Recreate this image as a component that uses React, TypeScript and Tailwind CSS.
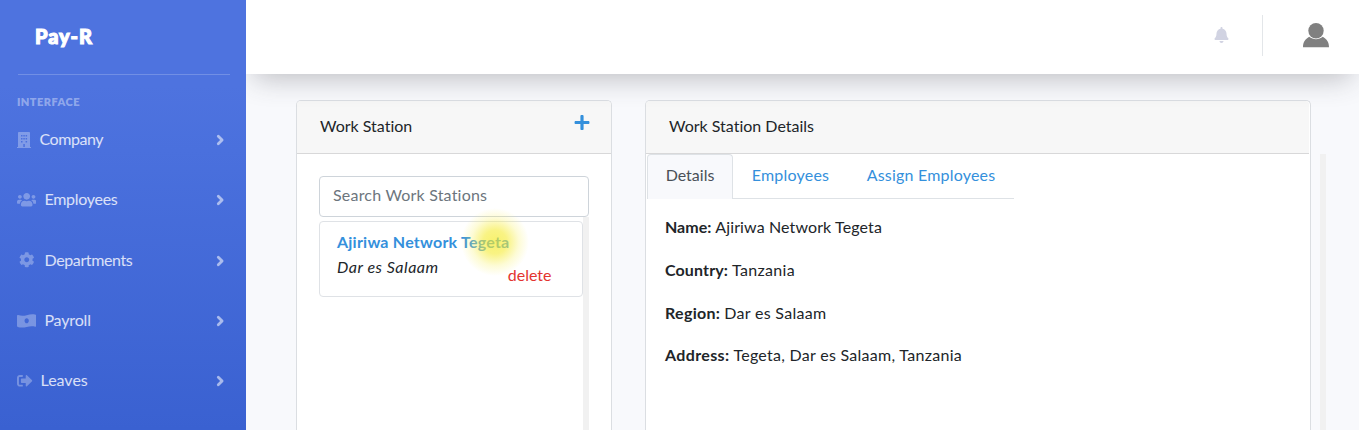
import React from "react";
import { FaBell, FaCog, FaPlus, FaSignOutAlt, FaUsers } from "react-icons/fa";

function BuildingIcon() {
  return (
    <svg className="h-[16px] w-[14px]" viewBox="0 0 14 16" fill="currentColor">
      <path
        fillRule="evenodd"
        d="M1 .8C1 .3 1.300 0 1.800 0h10.400c.5 0 .8.3.8.8V15h1v1H0v-1h1ZM4 3v1.500h1.500V3ZM6.300 3v1.500h1.500V3ZM8.600 3v1.500h1.500V3ZM4 6v1.500h1.500V6ZM6.300 6v1.500h1.500V6ZM8.600 6v1.500h1.500V6ZM4 9v1.500h1.500V9ZM8.600 9v1.500h1.500V9ZM6.300 12v3h1.500v-3Z"
      />
    </svg>
  );
}

function BanknoteIcon() {
  return (
    <svg className="h-[15.5px] w-[19.4px]" viewBox="0 0 20 16" fill="currentColor">
      <path
        fillRule="evenodd"
        d="M1.200 2C4 3.100 6.800 3.100 10 2.200S16 .9 19.200 1.700c.5.2.8.5.8 1v10.600c0 .6-.5.9-1.100.8-3-.6-5.800-.5-8.900.3s-6 1-9.200.1c-.5-.2-.8-.5-.8-1V2.800c0-.7.5-1 1.200-.8ZM10 5.300c-1.200 0-2.200 1.200-2.200 2.700s1 2.700 2.200 2.700 2.200-1.200 2.200-2.700-1-2.700-2.200-2.700Z"
      />
    </svg>
  );
}

function Chevron() {
  return (
    <svg className="h-[12px] w-[9px]" viewBox="0 0 9 12" fill="none" stroke="currentColor" strokeWidth="2.8" strokeLinecap="round" strokeLinejoin="round">
      <path d="M2.300 2.300 6.100 6 2.300 9.700" />
    </svg>
  );
}

const menu = [
  { label: "Company", icon: <BuildingIcon />, gap: "gap-[8.5px]", spacing: "tracking-[-0.45px]" },
  { label: "Employees", icon: <FaUsers className="h-[15.5px] w-[19.4px]" />, gap: "gap-[8px]", spacing: "tracking-[-0.28px]" },
  { label: "Departments", icon: <FaCog className="mx-[2px] h-[15.5px] w-[15.5px]" />, gap: "gap-[8px]", spacing: "tracking-[-0.38px]" },
  { label: "Payroll", icon: <BanknoteIcon />, gap: "gap-[8px]", spacing: "tracking-[-0.15px]" },
  { label: "Leaves", icon: <FaSignOutAlt className="h-[15.5px] w-[15.5px]" />, gap: "gap-[8px]", spacing: "tracking-[0px]" },
];

const details = [
  { name: "Name:", value: "Ajiriwa Network Tegeta", nameSpacing: "tracking-[0px]", valueSpacing: "tracking-[0.12px]" },
  { name: "Country:", value: "Tanzania", nameSpacing: "tracking-[0.13px]", valueSpacing: "tracking-[0.3px]" },
  { name: "Region:", value: "Dar es Salaam", nameSpacing: "tracking-[0.3px]", valueSpacing: "tracking-[0.3px]" },
  { name: "Address:", value: "Tegeta, Dar es Salaam, Tanzania", nameSpacing: "tracking-[0.35px]", valueSpacing: "tracking-[0.28px]" },
];

function Sidebar() {
  return (
    <aside className="relative z-20 h-full w-[246px] shrink-0 overflow-hidden bg-[linear-gradient(180deg,#4e73df_0px,#4e73df_85px,#4a70dd_150px,#3a61d1_430px)]">
      <div className="flex h-[74px] items-center pl-[35px]">
        <span className="-mt-[2px] text-[20px] leading-none font-black tracking-[0.9px] text-white [-webkit-text-stroke:1.1px_white]">Pay-R</span>
      </div>
      <div className="ml-[18px] h-px w-[212px] bg-white/20" />
      <div className="mt-[20px] ml-[17px] h-[14px] text-[11px] leading-[14px] font-extrabold tracking-[0.45px] text-white/40">INTERFACE</div>
      <nav className="mt-px flex flex-col">
        {menu.map((item) => (
          <a key={item.label} className="flex h-[60.3px] items-center pr-[21px] pl-[17px] text-white/30">
            <span className={`flex items-center ${item.gap}`}>
              <span className="-mt-px">{item.icon}</span>
              <span className={`pb-[2px] text-[16px] leading-5 text-white/80 ${item.spacing}`}>{item.label}</span>
            </span>
            <span className="ml-auto text-white/55">
              <Chevron />
            </span>
          </a>
        ))}
      </nav>
    </aside>
  );
}

function Topbar() {
  return (
    <header className="relative z-10 flex h-[74px] shrink-0 items-center justify-end bg-white pr-[30px] shadow-[0_12px_28px_-8px_rgba(58,59,69,0.32)]">
      <FaBell className="mr-[33px] h-[16px] w-[15px] -translate-y-[2px] text-[#d1d3e2]" />
      <div className="mr-[40px] h-[41px] w-px -translate-y-[2px] bg-[#e3e6e9]" />
      <svg className="h-[25px] w-[26px] -translate-y-[2px]" viewBox="0 0 26 25" fill="#808080">
        <circle cx="13" cy="7.7" r="7.7" />
        <path d="M6.200 13.800C2.200 16.100 0 19.300 0 24.300h26c0-5-2.200-8.200-6.200-10.500-3.800 3.300-9.800 3.300-13.600 0Z" />
      </svg>
    </header>
  );
}

function StationList() {
  return (
    <section className="flex w-[316px] flex-col rounded-t-[5px] border border-b-0 border-[#dbdee2] bg-white">
      <div className="flex h-[53px] shrink-0 items-center justify-between rounded-t-[4px] border-b border-[#d8d8d9] bg-[#f7f7f7] pr-[21px] pl-[23px]">
        <h2 className="-mt-[2px] text-[16px] text-[#212529]">Work Station</h2>
        <FaPlus className="h-[17px] w-[16px] -translate-y-[5px] text-[#3490dc]" />
      </div>
      <div className="flex grow flex-col px-[22px] pt-[22px]">
        <input
          className="h-[41px] w-full shrink-0 rounded-[4px] border border-[#ced4da] bg-white px-[13px] pb-[4px] text-[16px] tracking-[0.2px] placeholder:text-[#6c757d]"
          placeholder="Search Work Stations"
        />
        <div className="flex grow justify-between">
          <div className="relative mt-[4px] h-[76px] w-[264px] rounded-[4px] border border-[#dfe2e6] pt-[7px] pl-[17px]">
            <div className="h-[25px] text-[16px] leading-[25px] font-bold tracking-[0.23px] text-[#3490dc]">Ajiriwa Network Tegeta</div>
            <div className="h-[25px] text-[16px] leading-[25px] tracking-[0.52px] text-[#212529] italic">Dar es Salaam</div>
            <a className="absolute top-[40px] right-[30.500px] text-[16px] leading-[25px] text-[#e3342f]">delete</a>
            <div className="absolute top-[-14px] left-[141px] h-[68px] w-[68px] rounded-full bg-[radial-gradient(circle_closest-side,rgba(245,235,40,0.68)_0%,rgba(245,235,50,0.6)_35%,rgba(248,240,90,0.25)_70%,rgba(255,250,150,0)_100%)]" />
          </div>
          <div className="w-[6px] bg-[#f1f1f1]" />
        </div>
      </div>
    </section>
  );
}

function StationDetails() {
  return (
    <section className="ml-[33px] flex w-[666px] flex-col rounded-t-[5px] border border-b-0 border-[#dbdee2] bg-white">
      <div className="mr-px flex h-[53px] shrink-0 items-center rounded-t-[4px] border-b border-[#d8d8d9] bg-[#f7f7f7] pl-[23px]">
        <h2 className="-mt-[2px] text-[16px] text-[#212529]">Work Station Details</h2>
      </div>
      <div className="ml-px flex h-[45px] w-[367px] shrink-0 items-stretch border-b border-[#dee2e6] text-[16px] text-[#3490dc]">
        <a className="-mb-px flex w-[86px] items-center justify-center rounded-t-[4px] border border-b-0 border-[#dee2e6] bg-[#f8f9fc] pb-[4px] text-[#495057]">Details</a>
        <a className="flex w-[115px] items-center justify-center pb-[2px] tracking-[0.2px]">Employees</a>
        <a className="flex grow items-center justify-center pb-[2px] tracking-[0.2px]">Assign Employees</a>
      </div>
      <dl className="flex flex-col pt-[7px] pl-[19px] text-[16px] text-[#212529]">
        {details.map((item) => (
          <div key={item.name} className="flex h-[42.7px] items-center gap-[4px]">
            <dt className={`font-bold ${item.nameSpacing}`}>{item.name}</dt>
            <dd className={item.valueSpacing}>{item.value}</dd>
          </div>
        ))}
      </dl>
    </section>
  );
}

export default function App() {
  return (
    <div className="flex h-[430px] w-[1359px] overflow-hidden bg-[#f8f9fc] font-['Lato',sans-serif] [font-variant-ligatures:none]">
      <Sidebar />
      <div className="flex grow flex-col">
        <Topbar />
        <main className="flex grow pt-[26px] pl-[50px]">
          <StationList />
          <StationDetails />
          <div className="mt-[54px] ml-[9px] w-[6px] bg-[#f1f1f1]" />
        </main>
      </div>
    </div>
  );
}
